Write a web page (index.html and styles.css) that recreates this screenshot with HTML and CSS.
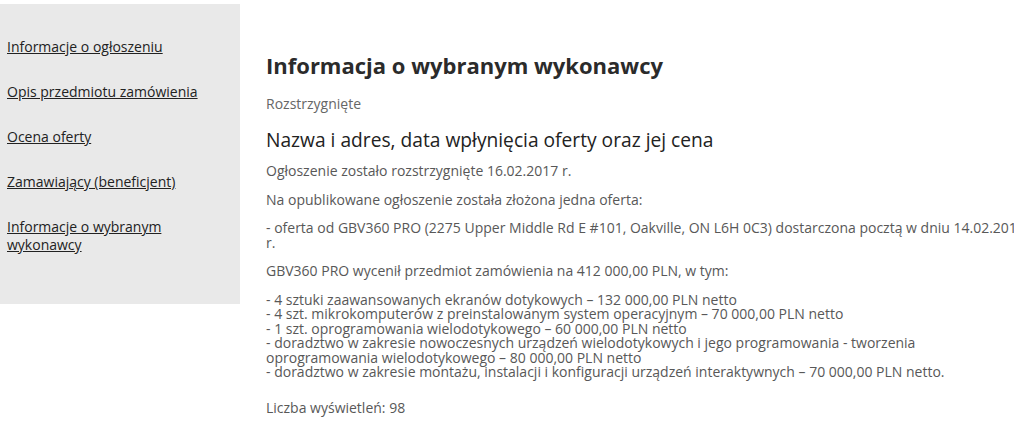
FILE: index.html
```html
<!DOCTYPE html>
<html lang="pl">
<head>
    <meta charset="UTF-8">
    <meta name="viewport" content="width=device-width, initial-scale=1.0">
    <title>Informacja o wybranym wykonawcy</title>
    <link rel="stylesheet" href="styles.css">
</head>
<body>
    <div class="page">
        <div class="sidebar">
            <a href="#">Informacje o ogłoszeniu</a>
            <a href="#">Opis przedmiotu zamówienia</a>
            <a href="#">Ocena oferty</a>
            <a href="#">Zamawiający (beneficjent)</a>
            <a href="#">Informacje o wybranym wykonawcy</a>
        </div>

        <div class="content">
            <h1>Informacja o wybranym wykonawcy</h1>
            <p class="status">Rozstrzygnięte</p>
            <h2>Nazwa i adres, data wpłynięcia oferty oraz jej cena</h2>
            <p>Ogłoszenie zostało rozstrzygnięte 16.02.2017 r.</p>
            <p>Na opublikowane ogłoszenie została złożona jedna oferta:</p>
            <p>- oferta od GBV360 PRO (2275 Upper Middle Rd E #101, Oakville, ON L6H 0C3) dostarczona pocztą w dniu 14.02.2017 r.</p>
            <p>GBV360 PRO wycenił przedmiot zamówienia na 412 000,00 PLN, w tym:</p>
            <p>- 4 sztuki zaawansowanych ekranów dotykowych – 132 000,00 PLN netto<br>
            - 4 szt. mikrokomputerów z preinstalowanym system operacyjnym – 70 000,00 PLN netto<br>
            - 1 szt. oprogramowania wielodotykowego – 60 000,00 PLN netto<br>
            - doradztwo w zakresie nowoczesnych urządzeń wielodotykowych i jego programowania - tworzenia<br>
            oprogramowania wielodotykowego – 80 000,00 PLN netto<br>
            - doradztwo w zakresie montażu, instalacji i konfiguracji urządzeń interaktywnych – 70 000,00 PLN netto.</p>
            <p class="views">Liczba wyświetleń: 98</p>
        </div>
    </div>
</body>
</html>
```

FILE: styles.css
```css
body {
    margin: 0;
    font-family: "Open Sans", "Noto Sans", sans-serif;
    background-color: #fff;
    color: #222;
    overflow: hidden;
}
.page {
    display: flex;
    align-items: flex-start;
}
.sidebar {
    flex: none;
    width: 240px;
    height: 300px;
    margin-top: 4px;
    padding: 34px 7px 0 7px;
    box-sizing: border-box;
    background-color: #e9e9e9;
    display: flex;
    flex-direction: column;
    align-items: flex-start;
    gap: 27px;
}
.sidebar a {
    max-width: 210px;
    font-size: 14px;
    line-height: 18px;
    color: #222;
    text-decoration: underline;
}
.content {
    flex: none;
    width: 768px;
    padding: 51px 0 0 26px;
}
h1 {
    font-size: 22px;
    font-weight: bold;
    color: #2b2b2b;
    line-height: 28px;
    margin: 0 0 16px 0;
}
h2 {
    font-size: 19.2px;
    font-weight: normal;
    color: #222;
    line-height: 26px;
    margin: 0 0 11px 0;
}
p {
    font-size: 14px;
    line-height: 14.5px;
    color: #585858;
    margin: 0 0 14px 0;
}
p.status {
    font-size: 14px;
    color: #666;
    line-height: 18px;
    margin-bottom: 14px;
}
p.views {
    margin-top: 21px;
}
```
